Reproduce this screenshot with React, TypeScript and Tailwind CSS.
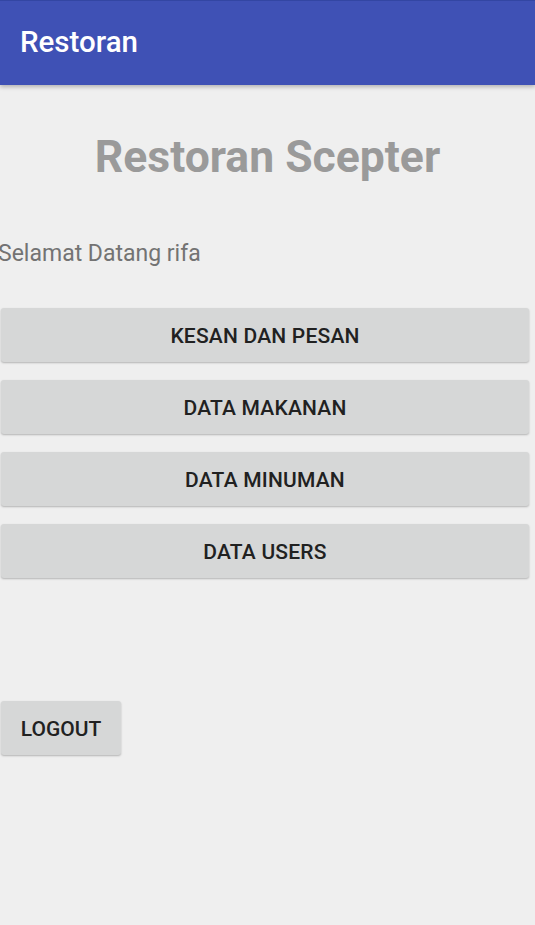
import React from 'react';

const menu = ['KESAN DAN PESAN', 'DATA MAKANAN', 'DATA MINUMAN', 'DATA USERS'];

const App: React.FC = () => {
    return (
        <div className="w-[535px] h-[925px] bg-[#efefef] overflow-hidden flex flex-col" style={{ fontFamily: 'Roboto, sans-serif' }}>
            <div className="h-[85px] shrink-0 bg-[#3f51b5] border-t border-[#3346a3] flex items-center px-5 shadow-[0_2px_4px_rgba(0,0,0,0.25)] z-10">
                <span className="text-white text-[29.5px] font-medium leading-none">Restoran</span>
            </div>

            <div className="flex flex-col">
                <h1 className="mt-[44px] text-center text-[44.5px] font-bold text-[#9a9a9a] leading-[56px]">Restoran Scepter</h1>

                <p className="mt-[55px] -ml-[2px] text-[23px] text-[#737373] leading-[28px] whitespace-nowrap">Selamat Datang rifa</p>

                <div className="mt-[40px] flex flex-col gap-[18px] pl-[1px] pr-[6px]">
                    {menu.map((label) => (
                        <button
                            key={label}
                            className="h-[54px] w-full pt-[4px] rounded-[3px] bg-[#d6d7d7] shadow-[0_1px_2px_rgba(0,0,0,0.25)] text-[21px] font-medium text-[#212121] tracking-[0.2px]"
                        >
                            {label}
                        </button>
                    ))}
                </div>

                <div className="mt-[123px] pl-[1px]">
                    <button className="h-[54px] w-[120px] pt-[4px] rounded-[3px] bg-[#d6d7d7] shadow-[0_1px_2px_rgba(0,0,0,0.25)] text-[21px] font-medium text-[#212121]">
                        LOGOUT
                    </button>
                </div>
            </div>
        </div>
    );
};

export default App;
